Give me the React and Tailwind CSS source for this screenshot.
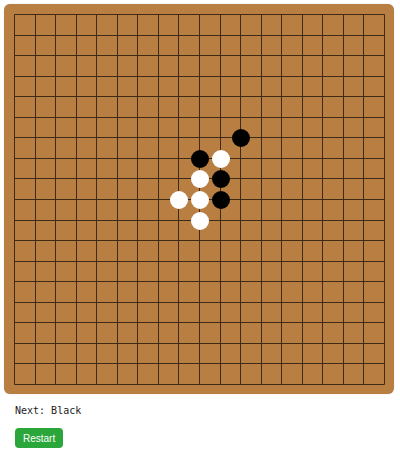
const SIZE = 19;
const GRID = 370;
const STEP = GRID / (SIZE - 1);

const stones = [
  { x: 11, y: 6, c: 'black' },
  { x: 9, y: 7, c: 'black' },
  { x: 10, y: 7, c: 'white' },
  { x: 9, y: 8, c: 'white' },
  { x: 10, y: 8, c: 'black' },
  { x: 8, y: 9, c: 'white' },
  { x: 9, y: 9, c: 'white' },
  { x: 10, y: 9, c: 'black' },
  { x: 9, y: 10, c: 'white' },
];

const pos = (i) => Math.round(i * STEP) + 0.5;

const Board = () => (
  <div className="w-[390px] h-[390px] rounded-md bg-[#b97e42] p-[10px] shadow-[0_0_1px_rgba(0,0,0,0.3)]">
    <div className="relative w-[371px] h-[371px]">
      <svg width="371" height="371" className="block">
        {Array.from({ length: SIZE }).map((_, i) => (
          <g key={i}>
            <line x1={pos(i)} y1={0.5} x2={pos(i)} y2={pos(SIZE - 1)} stroke="#3f2a15" strokeWidth="1" />
            <line x1={0.5} y1={pos(i)} x2={pos(SIZE - 1)} y2={pos(i)} stroke="#3f2a15" strokeWidth="1" />
          </g>
        ))}
      </svg>
      {stones.map((s, i) => (
        <div
          key={i}
          className={`absolute w-[18px] h-[18px] rounded-full ${s.c === 'black' ? 'bg-black' : 'bg-white'}`}
          style={{ left: pos(s.x) - 9, top: pos(s.y) - 9 }}
        />
      ))}
    </div>
  </div>
);

export default function App() {
  return (
    <div className="p-1 bg-white min-h-[454px]">
      <Board />
      <div className="px-[11px] pt-[11px]">
        <div className="text-[10px] leading-3 text-[#222] font-['DejaVu_Sans_Mono',monospace]">Next: Black</div>
        <button className="mt-[11px] h-5 px-2 rounded bg-[#2aa63a] text-white text-[10px] font-['Liberation_Sans',Arial,sans-serif]">
          Restart
        </button>
      </div>
    </div>
  );
}
